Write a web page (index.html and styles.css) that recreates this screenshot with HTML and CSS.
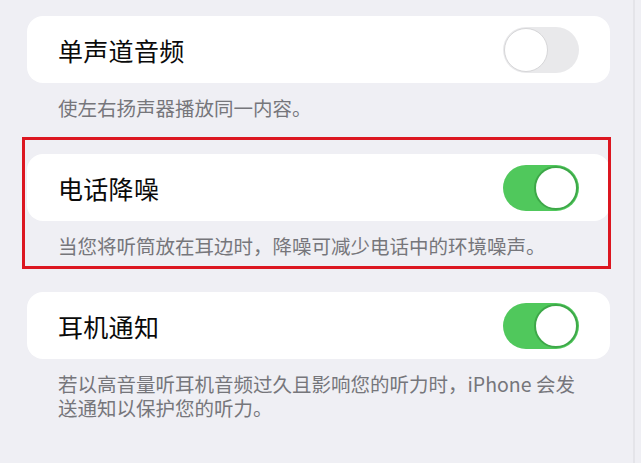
FILE: index.html
```html
<!DOCTYPE html>
<html lang="zh-CN">
<head>
<meta charset="utf-8">
<title>音频设置</title>
<link rel="stylesheet" href="styles.css">
</head>
<body>
<div class="page">
  <section class="group">
    <div class="card">
      <span class="title">单声道音频</span>
      <span class="switch off"><span class="knob"></span></span>
    </div>
    <p class="desc">使左右扬声器播放同一内容。</p>
  </section>
  <section class="group highlighted">
    <div class="card">
      <span class="title">电话降噪</span>
      <span class="switch on"><span class="knob"></span></span>
    </div>
    <p class="desc">当您将听筒放在耳边时，降噪可减少电话中的环境噪声。</p>
  </section>
  <section class="group">
    <div class="card">
      <span class="title">耳机通知</span>
      <span class="switch on"><span class="knob"></span></span>
    </div>
    <p class="desc">若以高音量听耳机音频过久且影响您的听力时，iPhone 会发送通知以保护您的听力。</p>
  </section>
</div>
</body>
</html>
```

FILE: styles.css
```css
html, body {
  margin: 0;
  padding: 0;
  background: #efeff4;
}
body {
  font-family: "Noto Sans CJK SC", "Noto Sans", sans-serif;
  width: 641px;
  height: 463px;
  overflow: hidden;
}
.page {
  width: 635px;
  height: 463px;
  box-sizing: border-box;
  border-right: 2px solid #e4e4e9;
  padding: 16px 0 0 27px;
  display: flex;
  flex-direction: column;
  gap: 34px;
}
.group {
  position: relative;
  width: 583px;
}
.highlighted::after {
  content: "";
  position: absolute;
  top: -17px;
  left: -5px;
  right: -1px;
  bottom: -11px;
  border: 3px solid #dc1620;
  pointer-events: none;
}
.card {
  height: 67px;
  background: #ffffff;
  border-radius: 16px;
  display: flex;
  align-items: center;
  justify-content: space-between;
  padding: 0 31px;
}
.title {
  font-size: 25px;
  color: #0a0a0a;
  letter-spacing: 0.3px;
}
.desc {
  margin: 0;
  padding: 13px 28px 0 31px;
  font-size: 19.5px;
  line-height: 24px;
  color: #76767b;
  letter-spacing: 0;
}
.switch {
  width: 76px;
  height: 46px;
  border-radius: 23px;
  box-sizing: border-box;
  display: flex;
  align-items: center;
  padding: 1px;
  flex: none;
}
.switch.off {
  background: #e9e9eb;
  justify-content: flex-start;
}
.switch.on {
  background: #50c85c;
  justify-content: flex-end;
}
.knob {
  width: 44px;
  height: 44px;
  border-radius: 50%;
  background: #ffffff;
  box-sizing: border-box;
}
.off .knob {
  border: 1.5px solid #d6d6d8;
}
.on .knob {
  border: 2px solid #3da848;
}
```
